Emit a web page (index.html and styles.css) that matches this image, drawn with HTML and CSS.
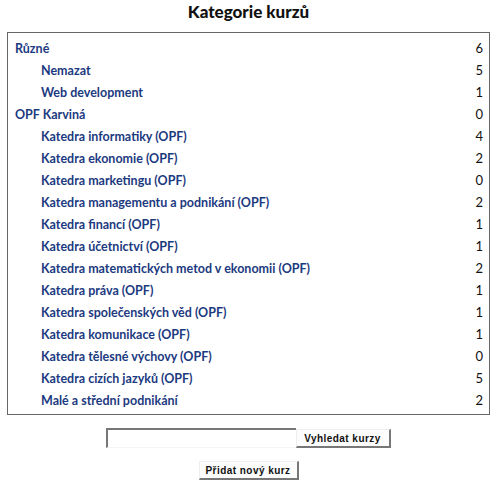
FILE: index.html
```html
<!DOCTYPE html>
<html lang="cs">
<head>
<meta charset="utf-8">
<title>Kategorie kurzů</title>
<link rel="stylesheet" href="styles.css">
</head>
<body>
<h2 class="title">Kategorie kurzů</h2>
<div class="box">
  <div class="row"><a class="name lvl0">Různé</a><span class="count">6</span></div>
  <div class="row"><a class="name lvl1">Nemazat</a><span class="count">5</span></div>
  <div class="row"><a class="name lvl1">Web development</a><span class="count">1</span></div>
  <div class="row"><a class="name lvl0">OPF Karviná</a><span class="count">0</span></div>
  <div class="row"><a class="name lvl1">Katedra informatiky (OPF)</a><span class="count">4</span></div>
  <div class="row"><a class="name lvl1">Katedra ekonomie (OPF)</a><span class="count">2</span></div>
  <div class="row"><a class="name lvl1">Katedra marketingu (OPF)</a><span class="count">0</span></div>
  <div class="row"><a class="name lvl1">Katedra managementu a podnikání (OPF)</a><span class="count">2</span></div>
  <div class="row"><a class="name lvl1">Katedra financí (OPF)</a><span class="count">1</span></div>
  <div class="row"><a class="name lvl1">Katedra účetnictví (OPF)</a><span class="count">1</span></div>
  <div class="row"><a class="name lvl1">Katedra matematických metod v ekonomii (OPF)</a><span class="count">2</span></div>
  <div class="row"><a class="name lvl1">Katedra práva (OPF)</a><span class="count">1</span></div>
  <div class="row"><a class="name lvl1">Katedra společenských věd (OPF)</a><span class="count">1</span></div>
  <div class="row"><a class="name lvl1">Katedra komunikace (OPF)</a><span class="count">1</span></div>
  <div class="row"><a class="name lvl1">Katedra tělesné výchovy (OPF)</a><span class="count">0</span></div>
  <div class="row"><a class="name lvl1">Katedra cizích jazyků (OPF)</a><span class="count">5</span></div>
  <div class="row"><a class="name lvl1">Malé a střední podnikání</a><span class="count">2</span></div>
</div>
<form class="search">
  <input class="field" type="text"><button class="btn" type="button">Vyhledat kurzy</button>
</form>
<div class="add">
  <button class="btn" type="button">Přidat nový kurz</button>
</div>
</body>
</html>
```
FILE: styles.css
```css
html, body {
  margin: 0;
  padding: 0;
  background: #fff;
}
body {
  padding: 0 6px 0 7px;
  font-family: Lato, "Open Sans", sans-serif;
}
.title {
  margin: 0;
  height: 32px;
  line-height: 23px;
  text-align: center;
  font-size: 17px;
  font-weight: 900;
  color: #111;
}
.box {
  border: 1px solid #666;
  padding: 4px 6px 3px 7px;
}
.row {
  display: flex;
  justify-content: space-between;
  align-items: center;
  height: 22px;
  font-size: 12.5px;
}
.name {
  color: #1c3a80;
  font-weight: bold;
  text-decoration: none;
}
.lvl1 {
  padding-left: 26px;
}
.count {
  color: #111;
  font-size: 13px;
}
.search {
  margin: 13px 0 0 0;
  display: flex;
  justify-content: center;
  padding-right: 1px;
}
.field {
  box-sizing: border-box;
  width: 190px;
  height: 20px;
  margin: 0;
  border-style: solid;
  border-width: 2px 0 1px 2px;
  border-color: #777 #f4f4f4 #f4f4f4 #777;
  background: #fff;
}
.btn {
  box-sizing: border-box;
  height: 19px;
  margin: 0;
  padding: 0;
  white-space: nowrap;
  font-family: "Liberation Sans", Arial, sans-serif;
  font-size: 10px;
  font-weight: bold;
  letter-spacing: 0.45px;
  color: #111;
  background: #fcfcfc;
  border-style: solid;
  border-width: 1px 2px 2px 1px;
  border-color: #eee #777 #777 #eee;
}
.search .btn {
  margin-top: 1px;
  width: 95px;
}
.add {
  display: flex;
  justify-content: center;
  margin-top: 13px;
}
.add .btn {
  width: 100px;
}
```
